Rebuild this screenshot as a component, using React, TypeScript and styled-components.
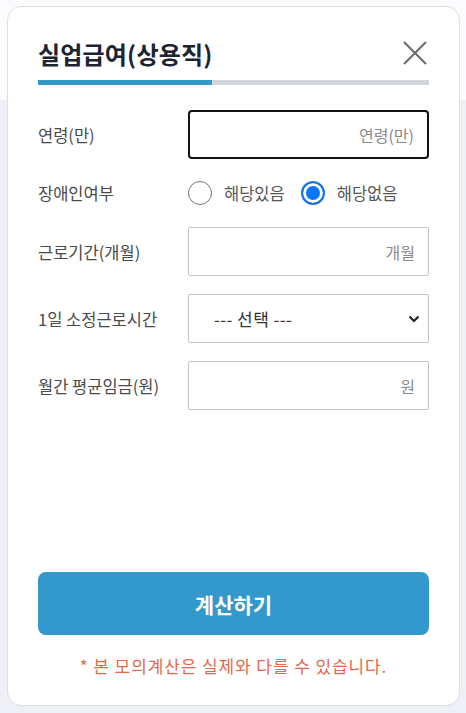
import styled, { createGlobalStyle } from 'styled-components';

const GlobalStyle = createGlobalStyle`
  * {
    box-sizing: border-box;
  }

  body {
    margin: 0;
    font-family: 'Noto Sans CJK KR', 'Noto Sans', sans-serif;
    background: linear-gradient(to bottom, #fbfbfd 0, #fbfbfd 100px, #eef0f6 100px, #eef0f6 100%);
    min-height: 713px;
  }
`;

const FIELDS = [
  { label: '연령(만)', placeholder: '연령(만)' },
  { label: '근로기간(개월)', placeholder: '개월' },
];

const App = () => {
  return (
    <>
      <GlobalStyle />
      <Card>
        <Header>
          <Title>실업급여(상용직)</Title>
          <CloseButton aria-label="닫기">
            <svg width="24" height="24" viewBox="0 0 24 24">
              <path d="M1 1 L23 23 M23 1 L1 23" stroke="#6b6b6b" strokeWidth="2" fill="none" />
            </svg>
          </CloseButton>
        </Header>
        <Progress>
          <ProgressFill style={{ width: '44.5%' }} />
        </Progress>

        <Form>
          <Row>
            <Label>{FIELDS[0].label}</Label>
            <TextInput $focused autoFocus placeholder={FIELDS[0].placeholder} />
          </Row>

          <RadioRow>
            <Label>장애인여부</Label>
            <RadioGroup>
              <RadioOption>
                <RadioMark />
                <span>해당있음</span>
              </RadioOption>
              <RadioOption>
                <RadioMark $checked />
                <span>해당없음</span>
              </RadioOption>
            </RadioGroup>
          </RadioRow>

          <Row>
            <Label>{FIELDS[1].label}</Label>
            <TextInput placeholder={FIELDS[1].placeholder} />
          </Row>

          <Row>
            <Label>1일 소정근로시간</Label>
            <SelectBox>
              <span>--- 선택 ---</span>
              <svg width="12" height="8" viewBox="0 0 12 8">
                <path d="M1.5 1.5 L6 6 L10.5 1.5" stroke="#222" strokeWidth="2.2" fill="none" />
              </svg>
            </SelectBox>
          </Row>

          <Row>
            <Label>월간 평균임금(원)</Label>
            <TextInput placeholder="원" />
          </Row>
        </Form>

        <Footer>
          <SubmitButton>계산하기</SubmitButton>
          <Notice>* 본 모의계산은 실제와 다를 수 있습니다.</Notice>
        </Footer>
      </Card>
    </>
  );
};

const Card = styled.div`
  display: flex;
  flex-direction: column;
  width: 453px;
  height: 700px;
  margin: 6px 0 0 7px;
  padding: 30px 30px 0 30px;
  background: #fff;
  border: 1px solid #dcdfe8;
  border-radius: 14px;
`;

const Header = styled.div`
  display: flex;
  justify-content: space-between;
  align-items: center;
  height: 32px;
  padding-right: 2px;
`;

const Title = styled.h2`
  margin: 0;
  font-size: 24px;
  font-weight: 700;
  color: #1c2333;
  letter-spacing: 0.2px;
`;

const CloseButton = styled.button`
  display: flex;
  padding: 0;
  border: none;
  background: none;
  cursor: pointer;
`;

const Progress = styled.div`
  height: 5px;
  margin-top: 11px;
  background: #d2d6dc;
`;

const ProgressFill = styled.div`
  height: 100%;
  background: #3399cc;
`;

const Form = styled.div`
  display: flex;
  flex-direction: column;
  gap: 18px;
  margin-top: 25px;
`;

const Row = styled.div`
  display: grid;
  grid-template-columns: 150px 1fr;
  align-items: center;
`;

const RadioRow = styled(Row)`
  height: 32px;
`;

const Label = styled.span`
  font-size: 16.5px;
  color: #4a4a4a;
`;

const TextInput = styled.input<{ $focused?: boolean }>`
  height: 49px;
  width: 100%;
  padding: 0 13px;
  font-family: inherit;
  font-size: 16px;
  text-align: right;
  border: ${({ $focused }) => ($focused ? '2px solid #111' : '1px solid #c4c4c4')};
  border-radius: ${({ $focused }) => ($focused ? '4px' : '2px')};
  outline: none;

  &::placeholder {
    color: #8a8a8a;
  }
`;

const RadioGroup = styled.div`
  display: flex;
  align-items: center;
  gap: 16px;
`;

const RadioOption = styled.label`
  display: flex;
  align-items: center;
  gap: 12px;
  font-size: 16.5px;
  color: #555;
`;

const RadioMark = styled.span<{ $checked?: boolean }>`
  width: 24px;
  height: 24px;
  border-radius: 50%;
  border: ${({ $checked }) => ($checked ? '2px solid #1a73e8' : '1.5px solid #767676')};
  background: ${({ $checked }) => ($checked ? '#0a75ff' : '#fff')};
  box-shadow: ${({ $checked }) => ($checked ? 'inset 0 0 0 3px #fff' : 'none')};
`;

const SelectBox = styled.div`
  display: flex;
  justify-content: space-between;
  align-items: center;
  height: 49px;
  padding: 0 8px 0 25px;
  border: 1px solid #c4c4c4;
  border-radius: 2px;
  font-size: 17px;
  letter-spacing: 0.4px;
  color: #333;
`;

const Footer = styled.div`
  display: flex;
  flex-direction: column;
  align-items: center;
  margin-top: auto;
  padding-bottom: 27px;
`;

const SubmitButton = styled.button`
  width: 100%;
  height: 63px;
  border: none;
  border-radius: 8px;
  background: #3399cc;
  color: #fff;
  font-family: inherit;
  font-size: 21px;
  font-weight: 700;
  cursor: pointer;
`;

const Notice = styled.p`
  margin: 19px 0 0;
  font-size: 17px;
  line-height: 24px;
  color: #e26a4c;
  letter-spacing: 0.9px;
`;

export default App;
